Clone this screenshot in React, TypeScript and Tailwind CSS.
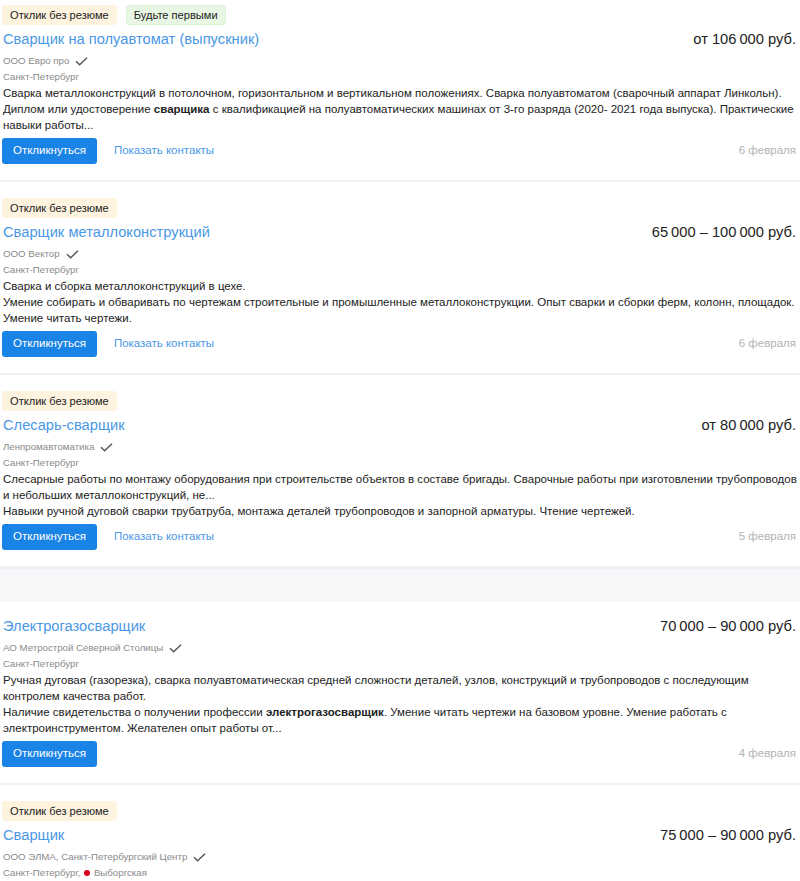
type Vacancy = {
  badges: { text: string; tone: "orange" | "green" }[];
  title: string;
  salary: string;
  company: string;
  city: React.ReactNode;
  desc: React.ReactNode[];
  contacts: boolean;
  date?: string;
};

const vacancies: Vacancy[] = [
  {
    badges: [
      { text: "Отклик без резюме", tone: "orange" },
      { text: "Будьте первыми", tone: "green" },
    ],
    title: "Сварщик на полуавтомат (выпускник)",
    salary: "от 106\u2009000 руб.",
    company: "ООО Евро про",
    city: "Санкт-Петербург",
    desc: [
      "Сварка металлоконструкций в потолочном, горизонтальном и вертикальном положениях. Сварка полуавтоматом (сварочный аппарат Линкольн).",
      <>
        Диплом или удостоверение <b>сварщика</b> с квалификацией на полуавтоматических машинах от 3-го разряда (2020- 2021 года выпуска). Практические навыки работы...
      </>,
    ],
    contacts: true,
    date: "6 февраля",
  },
  {
    badges: [{ text: "Отклик без резюме", tone: "orange" }],
    title: "Сварщик металлоконструкций",
    salary: "65\u2009000 – 100\u2009000 руб.",
    company: "ООО Вектор",
    city: "Санкт-Петербург",
    desc: [
      "Сварка и сборка металлоконструкций в цехе.",
      "Умение собирать и обваривать по чертежам строительные и промышленные металлоконструкции. Опыт сварки и сборки ферм, колонн, площадок. Умение читать чертежи.",
    ],
    contacts: true,
    date: "6 февраля",
  },
  {
    badges: [{ text: "Отклик без резюме", tone: "orange" }],
    title: "Слесарь-сварщик",
    salary: "от 80\u2009000 руб.",
    company: "Ленпромавтоматика",
    city: "Санкт-Петербург",
    desc: [
      "Слесарные работы по монтажу оборудования при строительстве объектов в составе бригады. Сварочные работы при изготовлении трубопроводов и небольших металлоконструкций, не...",
      "Навыки ручной дуговой сварки трубатруба, монтажа деталей трубопроводов и запорной арматуры. Чтение чертежей.",
    ],
    contacts: true,
    date: "5 февраля",
  },
];

const vacancy4: Vacancy = {
  badges: [],
  title: "Электрогазосварщик",
  salary: "70\u2009000 – 90\u2009000 руб.",
  company: "АО Метрострой Северной Столицы",
  city: "Санкт-Петербург",
  desc: [
    "Ручная дуговая (газорезка), сварка полуавтоматическая средней сложности деталей, узлов, конструкций и трубопроводов с последующим контролем качества работ.",
    <>
      Наличие свидетельства о получении профессии <b>электрогазосварщик</b>. Умение читать чертежи на базовом уровне. Умение работать с электроинструментом. Желателен опыт работы от...
    </>,
  ],
  contacts: false,
  date: "4 февраля",
};

const vacancy5: Vacancy = {
  badges: [{ text: "Отклик без резюме", tone: "orange" }],
  title: "Сварщик",
  salary: "75\u2009000 – 90\u2009000 руб.",
  company: "ООО ЭЛМА, Санкт-Петербургский Центр",
  city: (
    <>
      Санкт-Петербург,{" "}
      <span className="inline-block w-[6px] h-[6px] rounded-full bg-[#d6001c] mx-[1px]" />{" "}
      Выборгская
    </>
  ),
  desc: [],
  contacts: false,
};

const Verified = () => (
  <svg width="13" height="9" viewBox="0 0 13 9" className="text-[#555]">
    <polyline points="1,4.2 4.6,7.8 12,0.8" fill="none" stroke="currentColor" strokeWidth="1.4" />
  </svg>
);

const Card: React.FC<{ v: Vacancy; top?: string; last?: boolean }> = ({ v, top = "pt-4", last }) => {
  return (
    <div className={`${top} ${last ? "" : "pb-4 border-b-2 border-[#f1f1f1]"} pl-[3px] pr-[4px]`}>
      {v.badges.length > 0 && (
        <div className="flex gap-[9px] mb-1 -ml-[1px]">
          {v.badges.map((b) => (
            <span
              key={b.text}
              className={`h-5 rounded-[3px] text-[11.1px] text-[#222] ${
                b.tone === "orange"
                  ? "px-[8px] bg-[#fef3df] leading-[20px]"
                  : "px-[7px] bg-[#e7f7e3] border border-dashed border-[#d3efcc] leading-[18px]"
              }`}
            >
              {b.text}
            </span>
          ))}
        </div>
      )}
      <div className="flex justify-between items-baseline">
        <a className="text-[14.7px] leading-[20px] text-[#4a98e6]">{v.title}</a>
        <span className="text-[14.7px] leading-[20px] text-[#222]">{v.salary}</span>
      </div>
      <div className="mt-1 flex items-center gap-[6px] text-[9.7px] leading-[16px] text-[#8a8a8a]">
        {v.company}
        <Verified />
      </div>
      <div className="text-[9.7px] leading-[16px] text-[#8a8a8a]">{v.city}</div>
      {v.desc.length > 0 && (
        <div className="-mr-[4px] text-[11.5px] leading-[16px] text-[#222]">
          {v.desc.map((d, i) => (
            <p key={i}>{d}</p>
          ))}
        </div>
      )}
      {v.date && (
        <div className="mt-[5px] flex items-center">
          <button className="h-[26px] px-[11px] -ml-[1px] rounded-[3px] bg-[#1a83e6] text-white text-[11.5px]">
            Откликнуться
          </button>
          {v.contacts && (
            <a className="ml-[17px] text-[11.5px] text-[#4a98e6]">Показать контакты</a>
          )}
          <span className="ml-auto text-[11.5px] text-[#b3b3b3]">{v.date}</span>
        </div>
      )}
    </div>
  );
};

export default function App() {
  return (
    <div className="w-[800px] bg-white" style={{ fontFamily: '"Liberation Sans", Arial, sans-serif' }}>
      <Card v={vacancies[0]} top="pt-[5px]" />
      <Card v={vacancies[1]} />
      <Card v={vacancies[2]} />
      <div className="h-[34px] bg-[#f6f7f9] border-t border-[#eef0f6]" />
      <Card v={vacancy4} top="pt-[14px]" />
      <Card v={vacancy5} last />
    </div>
  );
}
